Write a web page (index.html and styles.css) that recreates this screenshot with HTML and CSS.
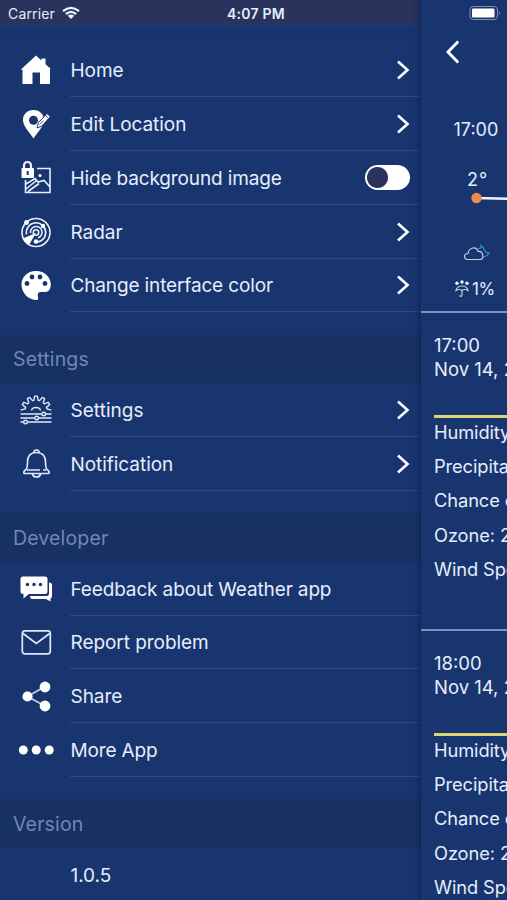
FILE: index.html
```html
<!DOCTYPE html>
<html lang="en">
<head>
<meta charset="utf-8">
<title>Weather</title>
<link rel="stylesheet" href="styles.css">
</head>
<body>
<div class="screen">
  <nav class="menu">
    <header class="status">
      <span class="carrier">Carrier</span>
      <svg class="wifi" width="18" height="14" viewBox="0 0 18 14" fill="none" stroke="#eef2fb" stroke-width="2.3"><path d="M1 5.2Q9-1.5 17 5.2M3.9 8.1Q9 3.7 14.1 8.1"/><path d="M9 13 5.8 9.8Q9 7.3 12.2 9.8Z" fill="#eef2fb" stroke="none"/></svg>
      <span class="clock">4:07 PM</span>
    </header>
    <ul class="group first">
      <li class="row">
        <svg class="icon" viewBox="0 0 36 36"><path d="M18 3.500 23.500 8.500V6.500H27.500V12.300L33 17H32V32H22V20.500H14.500V32H4.500V18H3.500V17Z" fill="#fff"/></svg>
        <div class="cell"><span>Home</span><svg class="chev" viewBox="0 0 14 20"><path d="M2 1.500 11.500 10 2 18.500"/></svg></div>
      </li>
      <li class="row">
        <svg class="icon" viewBox="0 0 36 36"><path d="M15.500 4C9 4 5 8.500 5 14 5 20 10.500 25 15.500 32.500 20.500 25 26 20 26 14 26 8.500 22 4 15.500 4Z" fill="#fff"/><circle cx="15.500" cy="14.300" r="4.500" fill="#19356f"/><path d="m19 22 1.500-5.500L29 7.500l3.300 3.300-8.500 9.300Z" fill="#fff" stroke="#19356f"/><path d="m21.500 18.500 4-4M27 9l3.300 3.300" stroke="#19356f" stroke-width=".8"/></svg>
        <div class="cell"><span>Edit Location</span><svg class="chev" viewBox="0 0 14 20"><path d="M2 1.500 11.500 10 2 18.500"/></svg></div>
      </li>
      <li class="row">
        <svg class="icon" viewBox="0 0 36 36" fill="none" stroke="#e8effc" stroke-width="1.600"><path d="M19 8.500H32V32.500H7.500V20M8 29 18.500 20.500M8 24 17 18.500 20 22 26 20.500 32 27M10 31.500 21 23.500"/><circle cx="22" cy="15.500" r="1.600" fill="#fff" stroke="none"/><path d="M6 10V6Q6 2 9.500 2T13 6V10" stroke-width="2.200"/><rect x="3.500" y="8" width="12.500" height="10" rx="1" fill="#fff" stroke="none"/><path d="M9.700 11v4" stroke="#19356f" stroke-width="2"/></svg>
        <div class="cell"><span class="tight">Hide background image</span><i class="toggle"></i></div>
      </li>
      <li class="row">
        <svg class="icon" viewBox="0 0 36 36" fill="none" stroke="#e8effc" stroke-width="1.600"><circle cx="18" cy="18.500" r="14"/><path d="M8.500 20.500A9.700 9.700 0 1 1 16 28M12.500 19A5.800 5.800 0 1 1 20 23.800"/><circle cx="18" cy="18.500" r="2.700"/><path d="M18 19 4.500 24.500Q7 29 11 31Z" fill="#fff" stroke="none"/><g fill="#fff" stroke="none"><circle cx="8.500" cy="8.500" r="2.400"/><circle cx="25" cy="12" r="2.200"/><circle cx="18" cy="27.500" r="2.200"/></g></svg>
        <div class="cell"><span>Radar</span><svg class="chev" viewBox="0 0 14 20"><path d="M2 1.500 11.500 10 2 18.500"/></svg></div>
      </li>
      <li class="row">
        <svg class="icon" viewBox="0 0 36 36"><path d="M18 4C9.500 4 3.500 10 3.500 17.500 3.500 26.500 11 33 18.500 33 20.500 33 20.500 31.500 20 30 19.300 27 20 25 23 25H27C31 25 32.800 21.500 32.800 17.500 32.800 10 26.500 4 18 4Z" fill="#fff"/><g fill="#19356f"><circle cx="14" cy="10" r="2.400"/><circle cx="22" cy="10" r="2.400"/><circle cx="9" cy="16.500" r="2.400"/><circle cx="27" cy="16.500" r="2.400"/></g></svg>
        <div class="cell"><span class="tight">Change interface color</span><svg class="chev" viewBox="0 0 14 20"><path d="M2 1.500 11.500 10 2 18.500"/></svg></div>
      </li>
    </ul>
    <h2 class="section">Settings</h2>
    <ul class="group">
      <li class="row">
        <svg class="icon" viewBox="0 0 36 36" fill="none" stroke="#dfe9fb" stroke-width="1.400" stroke-linejoin="round"><path d="M2.600 18.200 7.200 16.900 7.600 15.400 4.400 12.700 5.700 10.400 9.700 11.800 10.800 10.700 9.400 6.700 11.700 5.400 14.400 8.600 15.900 8.200 16.700 4.100H19.300L20.100 8.200 21.600 8.600 24.300 5.400 26.600 6.700 25.200 10.700 26.300 11.800 30.300 10.400 31.600 12.700 28.400 15.400 28.800 16.900 33.400 18.200M13.500 18.500Q14 15.500 18 15.500T22.500 18.500"/><path d="M2.500 22H23.500M28 22H33.500M2.500 26H16.500M21 26H33.500M2.500 30H5M10 30H33.500" stroke-width="1.600"/><circle cx="25.700" cy="22" r="1.800"/><circle cx="18.700" cy="26" r="1.800"/><circle cx="7.500" cy="30" r="1.800"/></svg>
        <div class="cell"><span class="wide">Settings</span><svg class="chev" viewBox="0 0 14 20"><path d="M2 1.500 11.500 10 2 18.500"/></svg></div>
      </li>
      <li class="row">
        <svg class="icon" viewBox="0 0 36 36" fill="none" stroke="#dfe9fb" stroke-width="1.600" stroke-linejoin="round"><path d="M16 7Q15.500 4 18.500 4T21 7M6 27.500Q5 25.500 8.500 23 9.500 21 9.500 16 9.500 6.500 18.500 6.500T27.500 16Q27.500 21 28.500 23 32 25.500 31 27.500ZM9 24H22M25 24H28M14.500 28Q15 31 18.500 31T22.500 28"/></svg>
        <div class="cell"><span>Notification</span><svg class="chev" viewBox="0 0 14 20"><path d="M2 1.500 11.500 10 2 18.500"/></svg></div>
      </li>
    </ul>
    <h2 class="section">Developer</h2>
    <ul class="group">
      <li class="row">
        <svg class="icon" viewBox="0 0 36 36"><path d="M5 5.500H27Q29.500 5.500 29.500 8V20.500Q29.500 23 27 23H11L5.500 27.500V23Q2.500 23 2.500 20.500V8Q2.500 5.500 5 5.500Z" fill="#fff"/><path d="M31 11.500Q34 11.500 34 14V24.500Q34 27 32.500 27.500V30.500L28 28H14Q12 28 12 25H29Q31 25 31 22Z" fill="#fff"/><g fill="#19356f"><circle cx="9.500" cy="13.500" r="1.700"/><circle cx="16" cy="13.500" r="1.700"/><circle cx="22.500" cy="13.500" r="1.700"/></g></svg>
        <div class="cell"><span class="tight">Feedback about Weather app</span></div>
      </li>
      <li class="row">
        <svg class="icon" viewBox="0 0 36 36" fill="none" stroke="#dfe9fb" stroke-width="1.700"><rect x="4.300" y="6.800" width="28" height="23" rx="2.500"/><path d="m5 9.500 13.300 10 13.300-10"/></svg>
        <div class="cell"><span>Report problem</span></div>
      </li>
      <li class="row">
        <svg class="icon" viewBox="0 0 36 36" fill="#fff"><path d="M27 8.500 9.500 18.500 27 28" fill="none" stroke="#c4d0ec" stroke-width="1.600"/><circle cx="27" cy="9" r="5.400"/><circle cx="9.500" cy="18.500" r="5.100"/><circle cx="27" cy="28" r="5.400"/></svg>
        <div class="cell"><span>Share</span></div>
      </li>
      <li class="row">
        <svg class="icon" viewBox="0 0 36 36" fill="#fff"><circle cx="5.300" cy="18" r="4.500"/><circle cx="18.200" cy="18" r="4.500"/><circle cx="31.200" cy="18" r="4.500"/></svg>
        <div class="cell"><span class="tight">More App</span></div>
      </li>
    </ul>
    <h2 class="section">Version</h2>
    <ul class="group">
      <li class="row"><i class="icon"></i><div class="cell"><span>1.0.5</span></div></li>
    </ul>
  </nav>

  <main class="forecast">
    <section class="hours">
      <svg class="battery" width="32" height="16" viewBox="0 0 32 16"><rect x="1" y="1.500" width="27.500" height="13" rx="3.500" fill="none" stroke="#8590b1"/><rect x="3" y="3.500" width="22.500" height="9" rx="1.200" fill="#fff"/><path d="M30 6Q32 8 30 10Z" fill="#8590b1"/></svg>
      <svg class="back" width="16" height="24" viewBox="0 0 16 24"><path d="M14.200 1.500 4 12 14.200 22.500" fill="none" stroke="#fff" stroke-width="2.900"/></svg>
      <div class="hour">17:00</div>
      <div class="temp">2<span>°</span></div>
      <svg class="point" width="86" height="12" viewBox="0 0 86 12"><path d="M55 6 86 6.700" stroke="#f1f4fc" stroke-width="2.400"/><circle cx="55.500" cy="6" r="5.200" fill="#e98a4c"/></svg>
      <svg class="cloud" width="27" height="18" viewBox="0 0 27 18" fill="none" stroke-width="1.200"><path d="M15 4.500Q19 4.500 18 1.500C22 4 21 9 26 9Q24 13 20.500 12.500" stroke="#398fc5"/><path d="M5 15.500C.5 15.500.5 9.500 5 9.500 6 3 13.500 2 15 7.500 20 6.500 22 15.500 17 15.500Z" stroke="#c3cde8"/></svg>
      <div class="rain"><svg width="14" height="18" viewBox="0 0 14 18" fill="none" stroke="#c3cde8" stroke-width="1.200"><path d="M1 10.500Q2 6 7 6T13 10.500Q10 8.500 7 10.500 4 8.500 1 10.500ZM7 10.500V15Q6.500 17.500 4.500 15.500"/><g fill="#eef3ff" stroke="none"><circle cx="2" cy="3.200" r="1.700"/><circle cx="7" cy="2" r="1.700"/><circle cx="12" cy="3.200" r="1.700"/></g></svg><span>1%</span></div>
    </section>
    <section class="detail">
      <div class="when">17:00<br>Nov 14, 2018</div>
      <div class="facts"><p>Humidity: 80%</p><p>Precipitation: 0</p><p>Chance of rain: 1%</p><p>Ozone: 280</p><p>Wind Speed: 3</p></div>
    </section>
    <section class="detail">
      <div class="when">18:00<br>Nov 14, 2018</div>
      <div class="facts"><p>Humidity: 80%</p><p>Precipitation: 0</p><p>Chance of rain: 1%</p><p>Ozone: 280</p><p>Wind Speed: 3</p></div>
    </section>
  </main>
</div>
</body>
</html>
```
FILE: styles.css
```css
* { box-sizing: border-box; }
body { margin: 0; background: #19356f; color: #e6edfb; font-family: Inter, "Liberation Sans", sans-serif; }
ul { margin: 0; padding: 0; list-style: none; }
.screen { display: grid; grid-template-columns: 421px 86px; width: 507px; height: 900px; overflow: hidden; }
.menu { height: 900px; overflow: hidden; background: #19356f; }
.status { display: flex; align-items: center; height: 25px; padding: 2px 0 0 8px; background: #29335b; font-size: 14px; box-shadow: 0 2px 4px #183779; }
.carrier { width: 54px; letter-spacing: .15px; }
.wifi { margin-top: -2px; }
.clock { margin-left: 147px; font-weight: 600; font-size: 14px; letter-spacing: .25px; }
.first { padding-top: 18.500px; }
.group { padding-bottom: 22.500px; }
.row { display: flex; align-items: center; height: 53.750px; padding-left: 18px; }
.icon { width: 36px; height: 36px; flex: none; }
.cell { display: flex; flex: 1; align-items: center; justify-content: space-between; height: 100%; margin-left: 16px; padding-right: 11px; border-bottom: 1px solid #304a80; font-size: 19px; white-space: nowrap; }
.cell span { padding: 2px 0 0 .5px; letter-spacing: -.05px; }
.cell .tight { letter-spacing: -.14px; }
.cell .wide { letter-spacing: .05px; }
.chev { width: 14px; height: 20px; margin-top: 1px; fill: none; stroke: #fff; stroke-width: 2.600; }
.toggle { width: 45px; height: 25px; margin-top: 1px; border-radius: 13px; background: radial-gradient(circle at 12.500px 12.500px, #29335e 10px, #fff 11px); }
.section { display: flex; align-items: center; height: 48.500px; margin: 0; padding-left: 13px; background: #173163; color: #7187b4; font-size: 19.500px; font-weight: 400; letter-spacing: .15px; }
.forecast { position: relative; width: 86px; background: #19356f; box-shadow: 0 0 6px 1px #0c1f4c; white-space: nowrap; }
.hours { display: flex; flex-direction: column; height: 313px; border-bottom: 2px solid #8091c0; }
.battery { margin: 5px 0 0 48px; }
.back { margin: 19px 0 0 23px; }
.hour { height: 22px; margin: 54px 0 0 32.500px; font-size: 18px; line-height: 23px; }
.temp { height: 22px; margin: 28px 0 0 46px; font-size: 18px; line-height: 23px; }
.temp span { margin-left: 1px; }
.point { margin-top: 2px; }
.cloud { margin: 40px 0 0 42px; }
.rain { display: flex; align-items: center; gap: 3px; height: 22px; margin: 16px 0 0 34px; font-size: 17px; letter-spacing: -.5px; }
.detail { height: 318px; padding: 21px 0 0 13px; overflow: hidden; border-bottom: 2px solid #8091c0; font-size: 18.300px; letter-spacing: -.1px; }
.when { height: 81px; font-size: 18.500px; line-height: 23.500px; letter-spacing: 0; }
.facts { border-top: 3px solid #d9d575; }
.facts p { height: 34.200px; margin: 0; line-height: 29px; }
```
